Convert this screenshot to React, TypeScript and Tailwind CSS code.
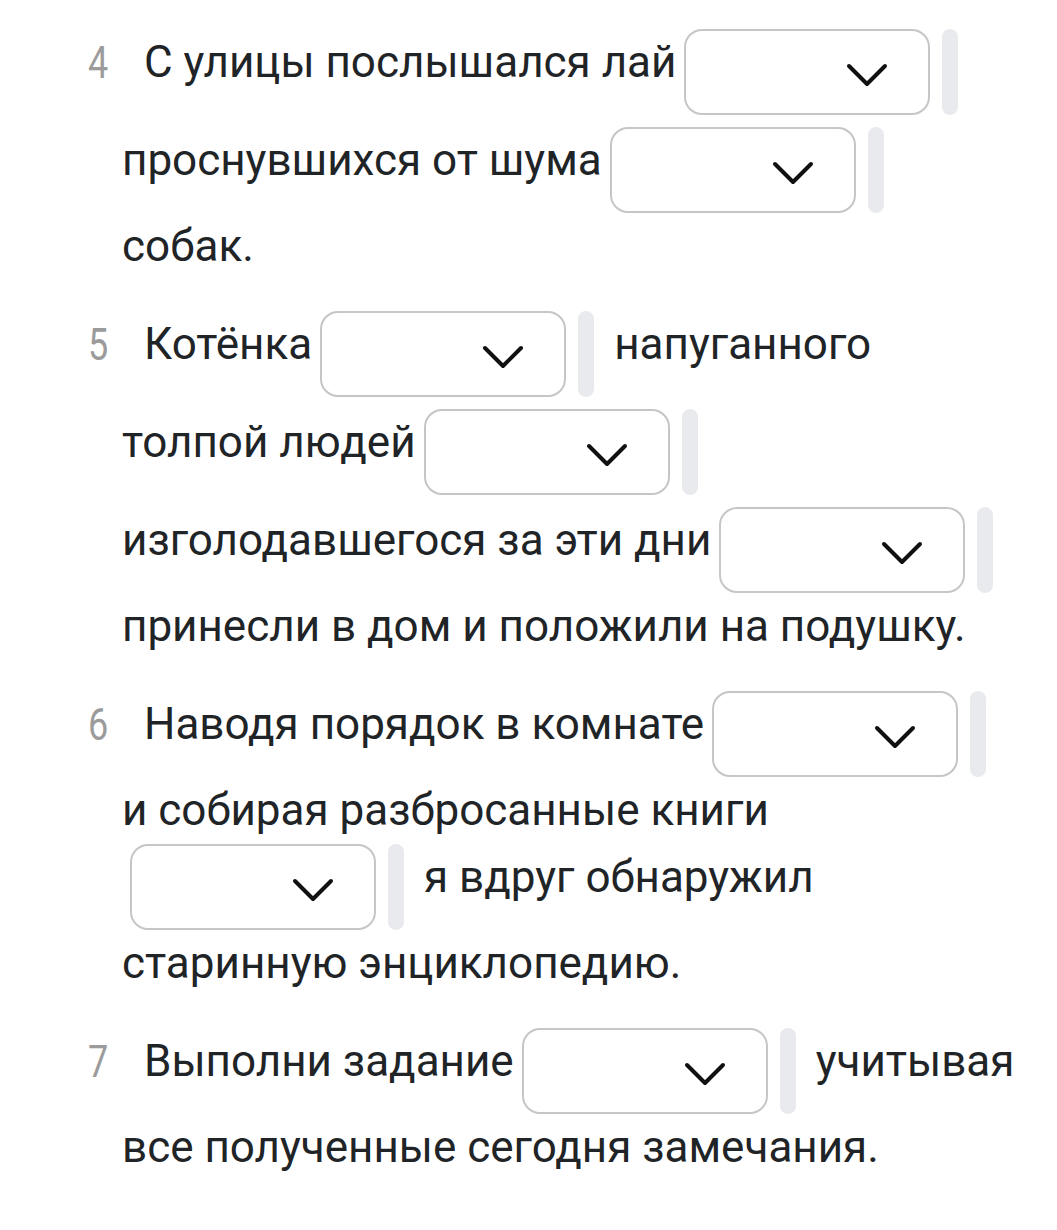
import React from "react";

type Seg = string | null; // null = blank to fill in

interface Item {
  n: number;
  rows: Seg[][];
}

const items: Item[] = [
  {
    n: 4,
    rows: [["С улицы послышался лай", null], ["проснувшихся от шума", null], ["собак."]],
  },
  {
    n: 5,
    rows: [
      ["Котёнка", null, "напуганного"],
      ["толпой людей", null],
      ["изголодавшегося за эти дни", null],
      ["принесли в дом и положили на подушку."],
    ],
  },
  {
    n: 6,
    rows: [
      ["Наводя порядок в комнате", null],
      ["и собирая разбросанные книги"],
      [null, "я вдруг обнаружил"],
      ["старинную энциклопедию."],
    ],
  },
  {
    n: 7,
    rows: [["Выполни задание", null, "учитывая"], ["все полученные сегодня замечания."]],
  },
];

function Chevron() {
  return (
    <svg width="42" height="24" viewBox="0 0 42 24" fill="none">
      <path
        d="M3 3 L21 21 L39 3"
        stroke="#111"
        strokeWidth="4"
        strokeLinecap="round"
        strokeLinejoin="round"
      />
    </svg>
  );
}

function Blank() {
  return (
    <span className="mx-2 flex shrink-0 items-start gap-3">
      <span className="flex h-[86px] w-[246px] items-center justify-end rounded-[18px] border-2 border-[#c6c6c6] bg-white pr-[40px] pt-[6px]">
        <Chevron />
      </span>
      <span className="h-[86px] w-[16px] rounded-full bg-[#e8eaed]" />
    </span>
  );
}

export default function App() {
  return (
    <div className="min-h-[1230px] w-[1057px] bg-white pl-[122px] pt-[29px] font-['Roboto',sans-serif] text-[44px] text-[#212427]">
      {items.map((item, i) => (
        <div key={item.n} className={i > 0 ? "mt-[31px]" : ""}>
          {item.rows.map((row, r) => {
            const hasBlank = row.includes(null);
            const prevBlank = r > 0 && item.rows[r - 1].includes(null);
            return (
              <div
                key={r}
                className={`flex items-start whitespace-nowrap ${hasBlank && prevBlank ? "mt-3" : ""}`}
              >
                {r === 0 && (
                  <span className="-ml-[34px] w-[56px] shrink-0 text-[45px] leading-[67px] text-[#9b9b9b]">
                    <span className="inline-block origin-left scale-x-[0.8]">{item.n}</span>
                  </span>
                )}
                {row.map((seg, s) =>
                  seg === null ? (
                    <Blank key={s} />
                  ) : (
                    <span
                      key={s}
                      className={`leading-[67px] ${s > 0 ? "ml-3" : ""}`}
                    >
                      {seg}
                    </span>
                  ),
                )}
              </div>
            );
          })}
        </div>
      ))}
    </div>
  );
}
